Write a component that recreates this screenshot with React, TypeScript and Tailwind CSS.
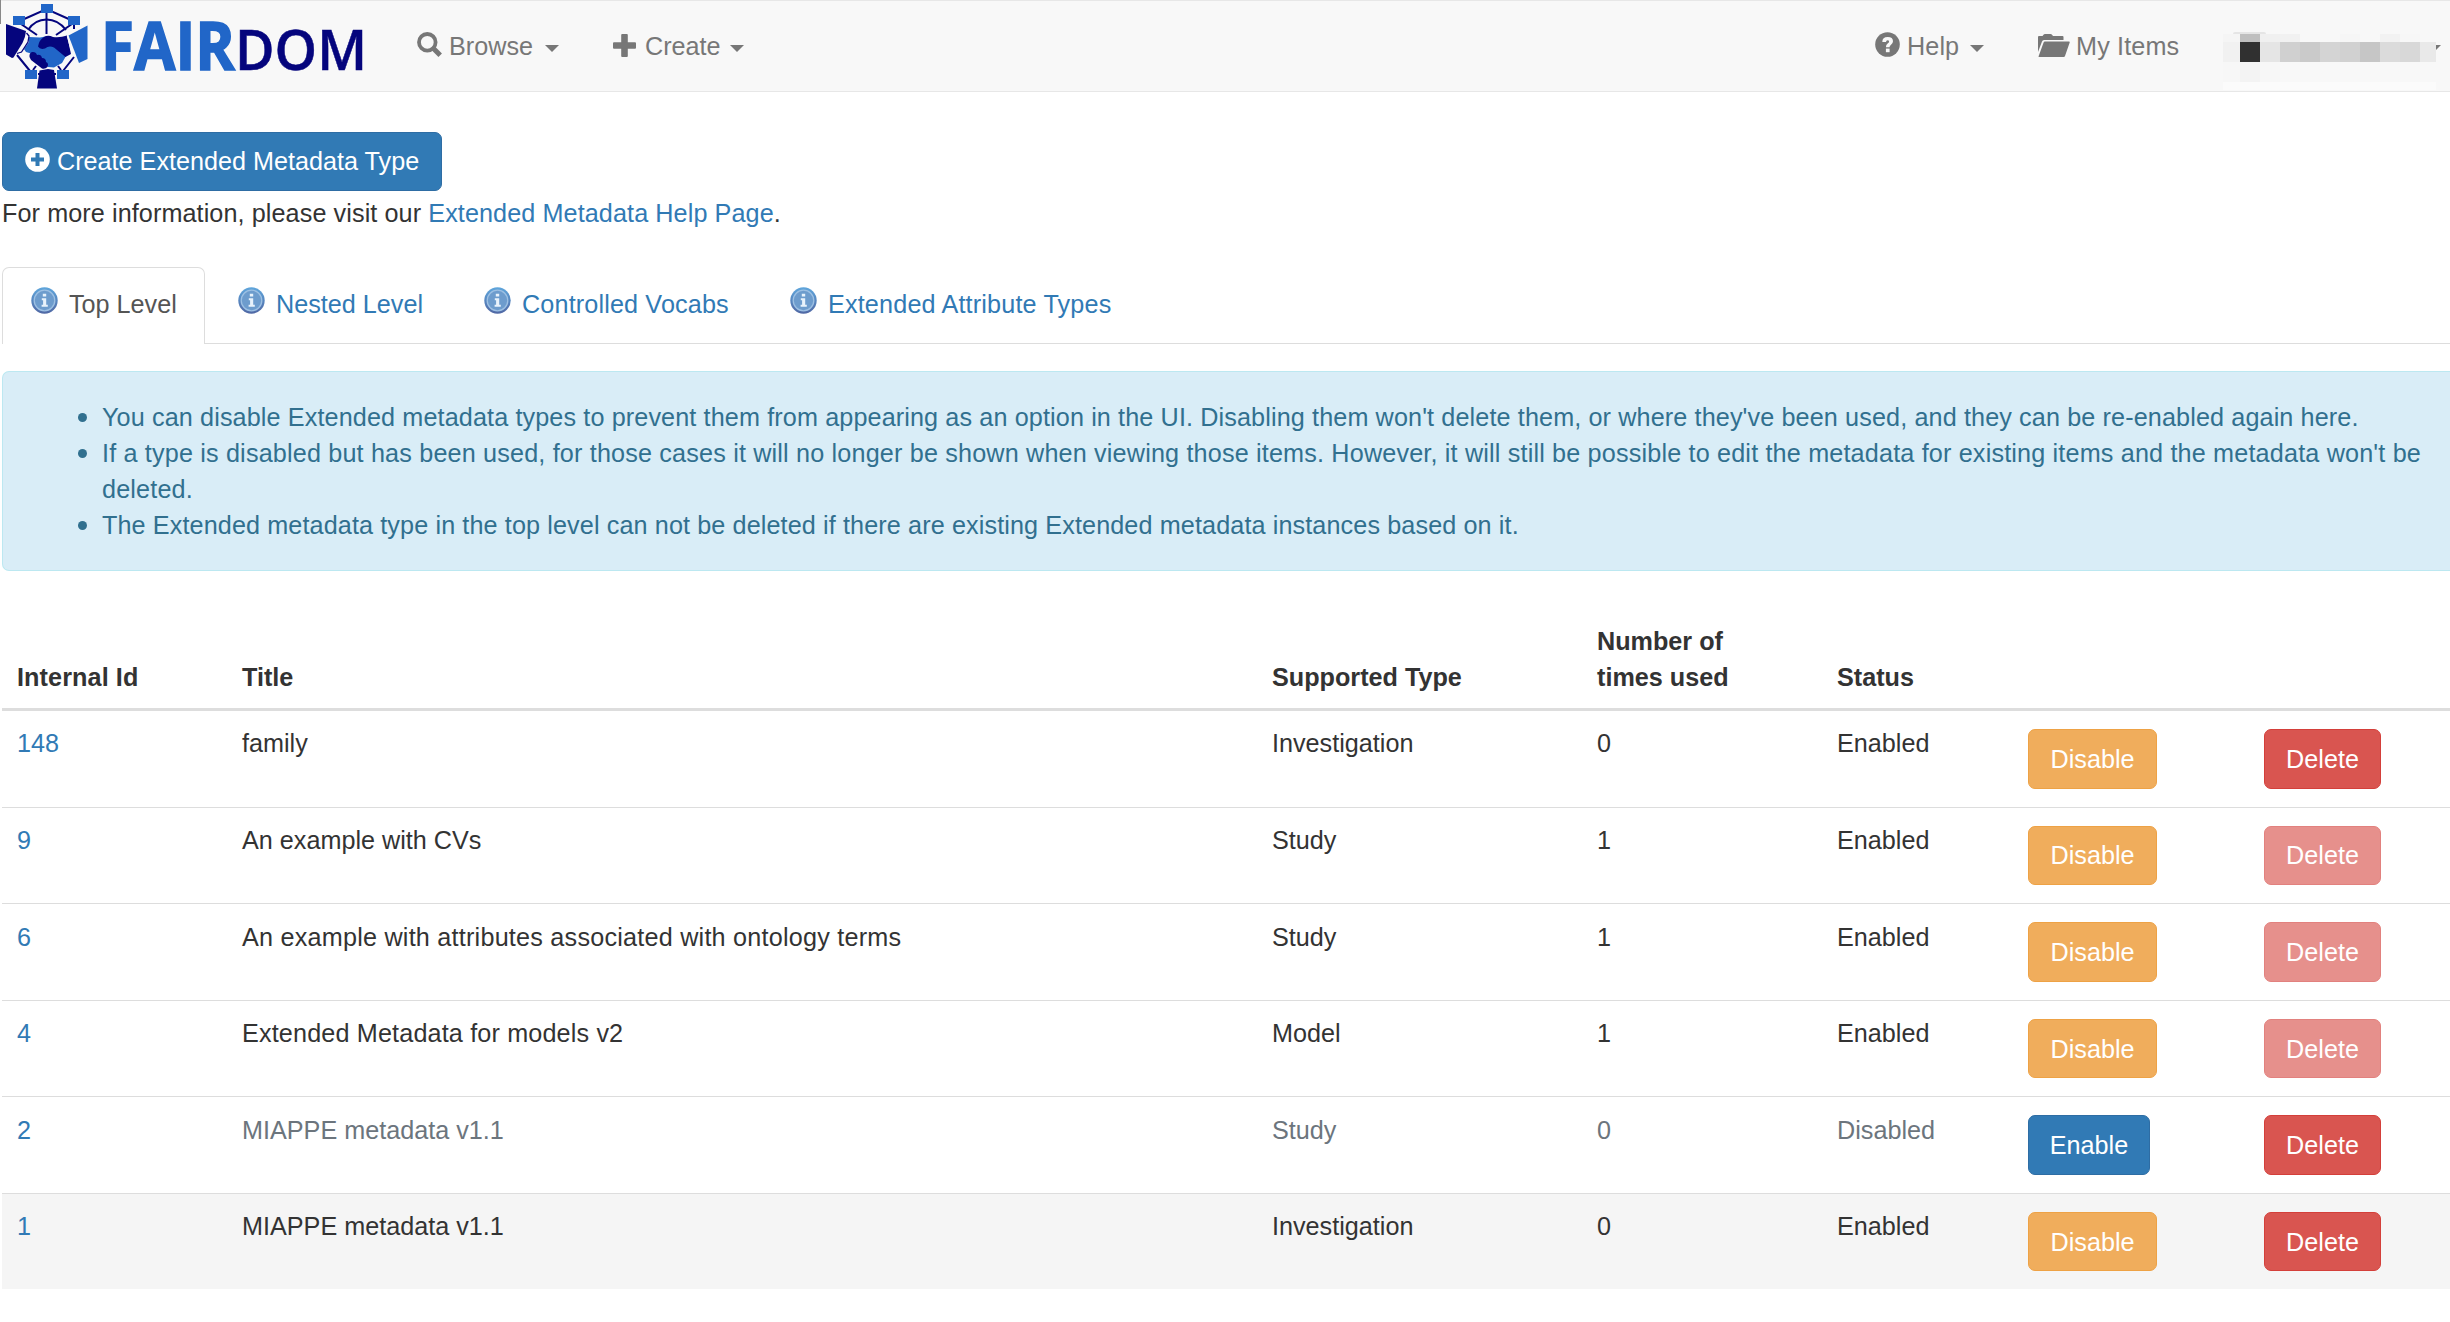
import React from "react";

function Caret() {
  return (
    <svg className="mt-[17px] block h-[7px] w-[14px] shrink-0" viewBox="0 0 14 7" fill="#777">
      <path d="M0 0H14L7 7Z" />
    </svg>
  );
}

function SearchIcon() {
  return (
    <svg className="mt-[4px] block h-[26px] w-[26px] shrink-0" viewBox="0 0 26 26" fill="none" stroke="#777">
      <circle cx="10.3" cy="10.3" r="8.3" strokeWidth="3.800" />
      <path d="M16 16L23.200 23.200" strokeWidth="5" strokeLinecap="butt" />
    </svg>
  );
}

function PlusIcon() {
  return (
    <svg className="mt-[6px] block h-[23px] w-[23px] shrink-0" viewBox="0 0 23 23" fill="#777">
      <rect x="8.200" y="0" width="6.600" height="23" rx="1" />
      <rect x="0" y="8.200" width="23" height="6.600" rx="1" />
    </svg>
  );
}

function HelpIcon() {
  return (
    <svg className="mt-[4px] block h-[25px] w-[25px] shrink-0" viewBox="0 0 25 25">
      <circle cx="12.500" cy="12.500" r="12.300" fill="#777" />
      <path
        d="M7.300 10Q7.300 5 12.700 5Q18 5 18 9.300Q18 11.800 15.600 13.200Q14.600 13.900 14.600 15.300H10.900Q10.800 12.700 12.900 11.300Q14.200 10.400 14.100 9.400Q14 8.200 12.600 8.200Q11.100 8.200 11 10Z"
        fill="#f8f8f8"
      />
      <rect x="10.900" y="16.600" width="3.700" height="3.600" fill="#f8f8f8" />
    </svg>
  );
}

function FolderOpenIcon() {
  return (
    <svg className="mt-[6px] block h-[23px] w-[32px] shrink-0" viewBox="0 0 32 23" fill="#777">
      <path d="M0 18V3Q0 2 1 2H4.500L5.500 .7Q6 0 7 0H12.500Q13.500 0 14 .7L15 2H24.500Q25.500 2 25.500 3V6H6Q4.500 6 4 7.500Z" />
      <path d="M5.500 8.800Q5.900 7.600 7 7.600H31Q32 7.600 31.700 8.600L27 22Q26.700 23 25.700 23H1Q.3 23 .6 22.200Z" />
    </svg>
  );
}

function PlusCircleIcon() {
  return (
    <svg className="mt-[14px] block h-[25px] w-[25px] shrink-0" viewBox="0 0 25 25">
      <circle cx="12.500" cy="12.500" r="12.300" fill="#fff" />
      <path d="M10.500 6h4v4.500H19v4h-4.500V19h-4v-4.500H6v-4h4.500z" fill="#317ab5" />
    </svg>
  );
}

function InfoIcon() {
  return (
    <svg className="mt-px block h-[27px] w-[27px] shrink-0" viewBox="0 0 27 27">
      <defs>
        <linearGradient id="info-ring" x1="0" y1="0" x2="0" y2="1">
          <stop offset="0" stopColor="#5fa6dc" />
          <stop offset="1" stopColor="#5068a4" />
        </linearGradient>
      </defs>
      <circle cx="13.500" cy="13.500" r="13.200" fill="url(#info-ring)" />
      <circle cx="13.500" cy="13.500" r="10.300" fill="#6d9ccd" stroke="#9dc0e3" strokeWidth="1.300" />
      <path d="M11.800 6.800h3.400v2.800h-3.400zM10.800 11.200h4.400v6.600h1.600v2h-6.200v-2h1.500v-4.600h-1.300z" fill="#e8f2fb" />
    </svg>
  );
}

function Logo() {
  return (
    <svg className="block h-[90px] w-[370px] shrink-0 overflow-visible" viewBox="0 1 370 90">
      <g fill="none" stroke="#05057d" strokeWidth="2">
        <path d="M22 20L46.500 9L71 20M46.500 12V34M17 55L30 71M74 57L63 71M38 74H56" />
        <path d="M28 30Q35 19.500 46.500 19.500Q58 19.500 66 30M21 24L37 35M72 24L56 35M33 70L36 66M61 70L58 66M74 25v4" />
      </g>
      <path d="M41 4h12v9H41zM13 16h12v9H13zM68 16h12v9H68zM25 70h12v9H25zM57 70h12v9H57z" fill="#2166c8" />
      <path d="M29 37L40 37.500L48 36L66 56L62 63L54 67.500L48 67L36 55L26 52L24 49L29 42Z" fill="#2166c8" />
      <path d="M38 46.500Q39 40 44 37Q48 34.500 53 37Q60 38 67 35.500L71 54L65.500 57L54 47.500Q49 45 45 48.500Q40 50 38 46.500Z" fill="#05057d" />
      <path d="M29.500 57Q29 53 32 52Q36 51.500 37 55Q41 54 42 58Q46 58 46 62Q49 63 47.500 67Q45 69.500 42 68.500L31 60Z" fill="#05057d" />
      <path d="M26.500 33L29 36L28 42L21.500 52L17 53.500" fill="none" stroke="#05057d" strokeWidth="1.300" />
      <path d="M6 24L26 31Q25.500 37 22.500 43L13.500 57.500L12 58L6 54.500Z" fill="#05057d" />
      <path d="M87.500 25.500V59L79 63L68.500 35.500Z" fill="#2166c8" />
      <path d="M67.500 36L72.500 54" fill="none" stroke="#f8f8f8" strokeWidth="1.500" />
      <path d="M39.500 70.500L48 69L54 70L57 88.500H37Z" fill="#05057d" />
      <text x="101" y="70" textLength="134" lengthAdjust="spacingAndGlyphs" fill="#2166c8" stroke="#2166c8" strokeWidth="1.600" className="font-['Open_Sans',sans-serif] text-[66px] font-bold">FAIR</text>
      <text x="235" y="70" textLength="132" lengthAdjust="spacingAndGlyphs" fill="#05057d" stroke="#05057d" strokeWidth="0.500" className="font-['Open_Sans',sans-serif] text-[56.5px] font-semibold">DOM</text>
    </svg>
  );
}

const mosaic = [
  "bg-[#f5f5f5]", "bg-[#bfbfbf]", "bg-[#f0f0f0]", "bg-[#f1f1f1]", "bg-[#f8f8f8]", "bg-[#f8f8f8]", "bg-[#f6f6f6]", "bg-[#f8f8f8]", "bg-[#f2f2f2]", "bg-[#f7f7f7]", "bg-[#f8f8f8]",
  "bg-[#f1f1f1]", "bg-[#303030]", "bg-[#e5e5e5]", "bg-[#d0d0d0]", "bg-[#cacaca]", "bg-[#d4d4d4]", "bg-[#d1d1d1]", "bg-[#c6c6c6]", "bg-[#dbdbdb]", "bg-[#d8d8d8]", "bg-[#e9e9e9]",
  "bg-[#f7f7f7]", "bg-[#f3f3f3]", "bg-[#f7f7f7]", "bg-[#f8f8f8]", "bg-[#f8f8f8]", "bg-[#f8f8f8]", "bg-[#f8f8f8]", "bg-[#f8f8f8]", "bg-[#f8f8f8]", "bg-[#f8f8f8]", "bg-[#f8f8f8]",
];

function MaskedUser() {
  return (
    <div className="flex shrink-0">
      <div className="mt-[4px]">
        <div className="ml-[10px] h-[2px] w-[33px] rounded-t-[2px] bg-[#e5e5e5]" />
        <div className="grid grid-cols-[17px_repeat(9,20px)_16px] grid-rows-[8px_20px_20px]">
          {mosaic.map((tone, i) => (
            <span key={i} className={tone} />
          ))}
        </div>
        <div className="h-[8px] bg-[#fbfbfb]" />
      </div>
      <svg className="mt-[17px] block h-[5px] w-[5px]" viewBox="0 0 5 5" fill="#777">
        <path d="M0 0H5L0 5Z" />
      </svg>
    </div>
  );
}

function Bullet({ children, className = "" }: { children: React.ReactNode; className?: string }) {
  return (
    <li className="flex">
      <span className="mr-[15px] mt-[14px] h-[9px] w-[9px] shrink-0 rounded-full bg-[#31708f]" />
      <span className={className}>{children}</span>
    </li>
  );
}

const rows = [
  { id: "148", title: "family", type: "Investigation", used: 0, enabled: true, deletable: true, row: "h-[96px] pt-[14px]", btn: "h-[60px] mt-[4px] pt-[11px]", tracking: "" },
  { id: "9", title: "An example with CVs", type: "Study", used: 1, enabled: true, deletable: false, row: "h-[96px] border-t pt-[14px]", btn: "h-[59px] mt-[4px] pt-[10px]", tracking: "" },
  { id: "6", title: "An example with attributes associated with ontology terms", type: "Study", used: 1, enabled: true, deletable: false, row: "h-[97px] border-t pt-[15px]", btn: "h-[60px] mt-[3px] pt-[11px]", tracking: "tracking-[0.22px]" },
  { id: "4", title: "Extended Metadata for models v2", type: "Model", used: 1, enabled: true, deletable: false, row: "h-[96px] border-t pt-[14px]", btn: "h-[59px] mt-[4px] pt-[11px]", tracking: "tracking-[0.15px]" },
  { id: "2", title: "MIAPPE metadata v1.1", type: "Study", used: 0, enabled: false, deletable: true, row: "h-[97px] border-t pt-[15px]", btn: "h-[60px] mt-[3px] pt-[11px]", tracking: "" },
  { id: "1", title: "MIAPPE metadata v1.1", type: "Investigation", used: 0, enabled: true, deletable: true, row: "h-[96px] border-t bg-[#f5f5f5] pt-[14px]", btn: "h-[59px] mt-[4px] pt-[11px]", tracking: "" },
];

const COLS = "grid grid-cols-[225px_1030px_325px_240px_191px_236px_1fr] pl-[15px]";
const BTN = "flex items-start justify-center rounded-[7px] border text-white";

export default function App() {
  return (
    <div className="relative h-[1322px] w-[2450px] overflow-hidden bg-white font-['Liberation_Sans',Arial,sans-serif] text-[25.2px] leading-[36px] text-[#333]">
      <span className="absolute left-0 top-0 h-[24px] w-px bg-[#888]" />
      <nav className="flex h-[92px] items-start border-y border-[#e7e7e7] bg-[#f8f8f8] text-[#777]">
        <Logo />
        <div className="ml-[47px] flex items-start pt-[27px]">
          <SearchIcon />
          <span className="ml-[6px] w-[96px]">Browse</span>
          <Caret />
          <span className="ml-[54px]"><PlusIcon /></span>
          <span className="ml-[9px] w-[85px]">Create</span>
          <Caret />
        </div>
        <div className="ml-auto flex w-[575px] items-start pt-[27px]">
          <HelpIcon />
          <span className="ml-[7px] w-[63px] tracking-[0.1px]">Help</span>
          <Caret />
          <span className="ml-[54px]"><FolderOpenIcon /></span>
          <span className="ml-[6px] w-[147px] tracking-[0.15px]">My Items</span>
          <MaskedUser />
        </div>
      </nav>

      <main className="pl-[2px]">
        <button className="mt-[40px] flex h-[59px] w-[440px] items-start rounded-[7px] border border-[#2e6da4] bg-[#317ab5] pl-[21.5px] text-white">
          <PlusCircleIcon />
          <span className="ml-[7.5px] mt-[10px]">Create Extended Metadata Type</span>
        </button>
        <p className="mt-[4px] tracking-[0.09px]">
          For more information, please visit our <a className="text-[#317ab5]">Extended Metadata Help Page</a>.
        </p>

        <div className="mt-[36px] flex h-[77px]">
          <div className="flex w-[203px] items-start rounded-t-[7px] border-x border-t border-[#ddd] pl-[28px] pt-[18px] text-[#555]">
            <InfoIcon />
            <span className="ml-[11px]">Top Level</span>
          </div>
          <div className="flex flex-1 items-start border-b border-[#ddd] pl-[33px] pt-[19px] text-[#317ab5]">
            <InfoIcon />
            <span className="ml-[11px] w-[208px]">Nested Level</span>
            <InfoIcon />
            <span className="ml-[11px] w-[268px] tracking-[0.14px]">Controlled Vocabs</span>
            <InfoIcon />
            <span className="ml-[11px] tracking-[0.16px]">Extended Attribute Types</span>
          </div>
        </div>

        <ul className="mt-[27px] h-[200px] rounded-l-[7px] border-y border-l border-[#bce8f1] bg-[#d9edf7] pl-[75px] pt-[27px] text-[#31708f]">
          <Bullet className="tracking-[0.118px]">
            You can disable Extended metadata types to prevent them from appearing as an option in the UI. Disabling them won't delete them, or where they've been used, and they can be re-enabled again here.
          </Bullet>
          <Bullet className="tracking-[0.166px]">
            If a type is disabled but has been used, for those cases it will no longer be shown when viewing those items. However, it will still be possible to edit the metadata for existing items and the metadata won't be deleted.
          </Bullet>
          <Bullet className="tracking-[0.11px]">
            The Extended metadata type in the top level can not be deleted if there are existing Extended metadata instances based on it.
          </Bullet>
        </ul>

        <div>
          <div className={`${COLS} mt-[52px] h-[88px] items-end border-b-[3px] border-[#ddd] pb-[13px] font-bold`}>
            <span className="tracking-[0.1px]">Internal Id</span>
            <span>Title</span>
            <span>Supported Type</span>
            <span className="w-[150px]">Number of times used</span>
            <span>Status</span>
          </div>
          {rows.map((r) => (
            <div key={r.id} className={`${COLS} ${r.row} items-start border-[#ddd] ${r.enabled ? "" : "text-[#6c757d]"}`}>
              <a className="text-[#317ab5]">{r.id}</a>
              <span className={r.tracking}>{r.title}</span>
              <span>{r.type}</span>
              <span>{r.used}</span>
              <span>{r.enabled ? "Enabled" : "Disabled"}</span>
              {r.enabled ? (
                <button className={`${BTN} ${r.btn} w-[129px] border-[#eea245] bg-[#f0ad5c]`}>Disable</button>
              ) : (
                <button className={`${BTN} ${r.btn} w-[122px] border-[#2e6da4] bg-[#317ab5]`}>Enable</button>
              )}
              <button className={`${BTN} ${r.btn} w-[117px] border-[#d43f3a] bg-[#d95550] ${r.deletable ? "" : "opacity-65"}`}>Delete</button>
            </div>
          ))}
        </div>
      </main>
    </div>
  );
}
